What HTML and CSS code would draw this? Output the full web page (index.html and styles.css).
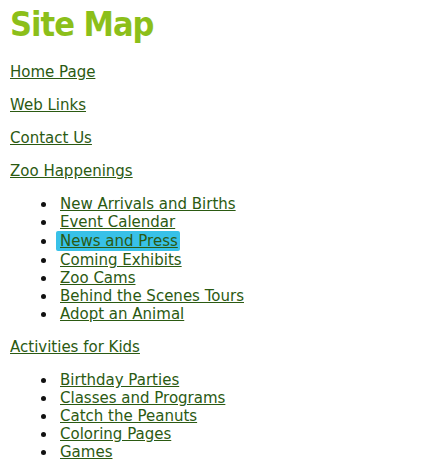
FILE: index.html
```html
<!DOCTYPE html>
<html>
<head>
<meta charset="utf-8">
<link rel="stylesheet" href="styles.css">
</head>
<body>
<h1 class="title">Site Map</h1>
<p class="item"><a href="#">Home Page</a></p>
<p class="item"><a href="#">Web Links</a></p>
<p class="item"><a href="#">Contact Us</a></p>
<p class="item"><a href="#">Zoo Happenings</a></p>
<ul class="sub">
  <li><a href="#">New Arrivals and Births</a></li>
  <li><a href="#">Event Calendar</a></li>
  <li><a href="#" class="hl">News and Press</a></li>
  <li><a href="#">Coming Exhibits</a></li>
  <li><a href="#">Zoo Cams</a></li>
  <li><a href="#">Behind the Scenes Tours</a></li>
  <li><a href="#">Adopt an Animal</a></li>
</ul>
<p class="item"><a href="#">Activities for Kids</a></p>
<ul class="sub">
  <li><a href="#">Birthday Parties</a></li>
  <li><a href="#">Classes and Programs</a></li>
  <li><a href="#">Catch the Peanuts</a></li>
  <li><a href="#">Coloring Pages</a></li>
  <li><a href="#">Games</a></li>
</ul>
</body>
</html>
```
FILE: styles.css
```css
html, body {
  background: #ffffff;
}
body {
  margin: 8px 10px;
  font-family: "DejaVu Sans", Verdana, sans-serif;
  font-size: 15px;
  line-height: 18px;
  color: #2b5a12;
}
a {
  color: #2b5a12;
  text-decoration: underline;
}
.title {
  margin: 0 0 22px;
  font-family: "DejaVu Sans", Verdana, sans-serif;
  font-stretch: condensed;
  font-weight: bold;
  font-size: 34px;
  letter-spacing: -1px;
  line-height: 33px;
  color: #8cbf1a;
}
.item {
  margin: 15px 0;
}
.sub {
  margin: 15px 0;
  padding: 0 0 0 31px;
  list-style: none;
}
.sub li {
  display: flex;
  align-items: center;
}
.sub li::before {
  content: "";
  width: 5px;
  height: 5px;
  border-radius: 50%;
  background: #111;
  margin-right: 14px;
  flex: none;
}
.hl {
  background: #38c1e8;
  margin-left: -4px;
  padding: 1px 2px 1px 4px;
  border-radius: 2px;
}
```
